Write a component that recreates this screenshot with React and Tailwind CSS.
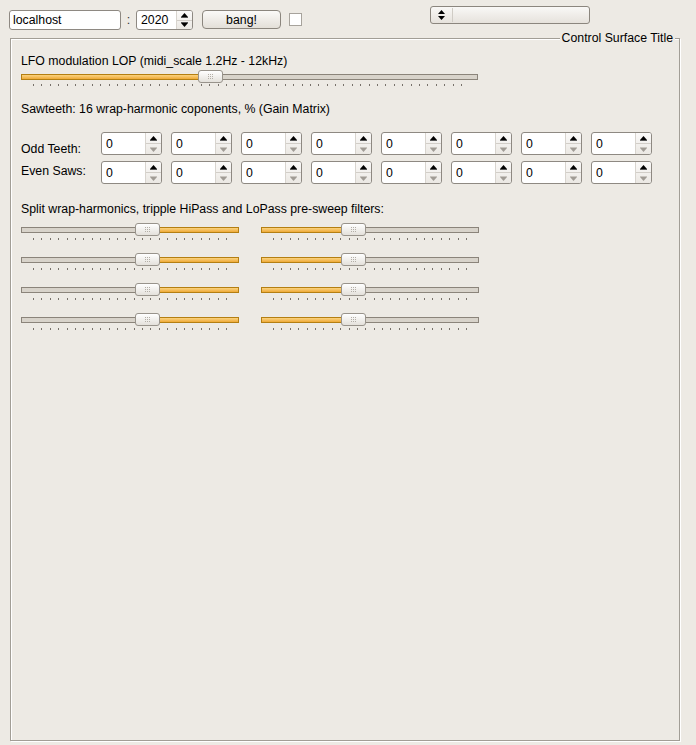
import React from 'react';

const font = { fontFamily: '"Liberation Sans", Arial, sans-serif' };

function ArrowUp({ dim }) {
  return (
    <svg width="7" height="5" viewBox="0 0 7 5" className="block">
      <polygon points="0,4 3.5,0 7,4" fill={dim ? '#a19c95' : '#000'} />
      <rect x="0" y="4" width="7" height="1" fill={dim ? '#c9c5bf' : '#555'} />
    </svg>
  );
}

function ArrowDown({ dim }) {
  return (
    <svg width="7" height="5" viewBox="0 0 7 5" className="block">
      <rect x="0" y="0" width="7" height="1" fill={dim ? '#c9c5bf' : '#555'} />
      <polygon points="0,1 3.5,5 7,1" fill={dim ? '#a19c95' : '#000'} />
    </svg>
  );
}

function SpinBox({ value, className, downDim }) {
  return (
    <div className={`flex rounded-[3px] border border-[#8e8982] bg-white ${className}`}>
      <div className="flex flex-1 items-center pl-[4px] text-black">{value}</div>
      <div className="flex w-[16px] flex-col rounded-r-[2px] border-l border-[#d8d4ce] bg-gradient-to-b from-[#fbfaf9] to-[#ebe8e3]">
        <div className="flex flex-1 items-center justify-center border-b border-[#d2cec8]"><ArrowUp /></div>
        <div className="flex flex-1 items-center justify-center"><ArrowDown dim={downDim} /></div>
      </div>
    </div>
  );
}

function Handle() {
  return (
    <div className="z-10 flex h-[13px] w-[25px] shrink-0 items-center justify-center rounded-[3px] border border-[#98938b] bg-gradient-to-b from-[#ffffff] to-[#e4e1db]">
      <div className="grid grid-cols-3 gap-[1px]">
        {Array.from({ length: 9 }).map((_, i) => (
          <div key={i} className="h-[1px] w-[1px] bg-[#b3aea6]" />
        ))}
      </div>
    </div>
  );
}

function Groove({ on, className }) {
  return on ? (
    <div className={`h-[6px] border border-[#b47f12] bg-gradient-to-b from-[#fbd37e] to-[#eeaa35] ${className}`} />
  ) : (
    <div className={`h-[6px] border border-[#8b847a] bg-[#d8d3ca] ${className}`} />
  );
}

function Ticks({ count, className }) {
  return (
    <div className={`flex h-[3px] justify-between ${className}`}>
      {Array.from({ length: count }).map((_, i) => (
        <div key={i} className="h-[2px] w-[1px] bg-[#77716a]" />
      ))}
    </div>
  );
}

function SplitSlider({ side }) {
  return (
    <div className="w-[218px]">
      <div className="flex h-[13px] items-center">
        {side === 'right' ? (
          <>
            <Groove className="w-[114px] border-r-0" />
            <Handle />
            <Groove on className="flex-1 border-l-0" />
          </>
        ) : (
          <>
            <Groove on className="w-[80px] border-r-0" />
            <Handle />
            <Groove className="flex-1 border-l-0" />
          </>
        )}
      </div>
      <Ticks count={24} className="mt-[2px] px-[12px]" />
    </div>
  );
}

function SpinRow({ label, labelOffset }) {
  return (
    <div className="flex h-[23px]">
      <div className={`h-[14px] w-[80px] ${labelOffset}`}>{label}</div>
      <div className="flex gap-[9px]">
        {Array.from({ length: 8 }).map((_, i) => (
          <SpinBox key={i} value="0" downDim className="h-[23px] w-[61px]" />
        ))}
      </div>
    </div>
  );
}

export default function App() {
  return (
    <div style={font} className="h-[745px] w-[696px] overflow-hidden bg-[#edeae4] text-[12.3px] leading-[14px] text-black">
      {/* toolbar */}
      <div className="flex h-[38px] items-start pl-[9px] pt-[10px]">
        <div className="flex h-[20px] w-[112px] items-center rounded-[3px] border border-[#8e8982] bg-white pl-[3px]">localhost</div>
        <div className="flex h-[20px] w-[15px] items-center justify-center text-[#333]">:</div>
        <SpinBox value="2020" className="h-[20px] w-[57px]" />
        <button className="ml-[9px] flex h-[19px] w-[79px] items-center justify-center rounded-[4px] border border-[#8b867e] bg-gradient-to-b from-[#fbfaf8] to-[#e3dfd8]">bang!</button>
        <div className="ml-[8px] mt-[3px] h-[13px] w-[13px] border border-[#a7a39c] bg-white" />
        <div className="-mt-[4px] ml-[128px] flex h-[18px] w-[160px] items-center rounded-[3px] border border-[#8b867e] bg-gradient-to-b from-[#f9f8f6] to-[#e6e2dc]">
          <div className="flex w-[21px] flex-col items-center">
            <svg width="7" height="10" viewBox="0 0 7 10" className="block">
              <polygon points="0,4 3.5,0 7,4" fill="#000" />
              <polygon points="0,6 3.5,10 7,6" fill="#000" />
            </svg>
          </div>
          <div className="h-[14px] w-[1px] bg-[#d0ccc5]" />
        </div>
      </div>

      {/* group box */}
      <div className="relative ml-[10px] h-[703px] w-[670px] border border-[#a29e96] shadow-[inset_1px_1px_0_#ffffff,1px_1px_0_#ffffff]">
        <div className="absolute -top-[8px] right-[4px] bg-[#edeae4] px-[2px]">Control Surface Title</div>
        <div className="flex flex-col pl-[10px] pt-[15px]">
          <div>LFO modulation LOP (midi_scale 1.2Hz - 12kHz)</div>
          <div className="mt-[2px] w-[457px]">
            <div className="flex h-[13px] items-center">
              <Groove on className="w-[177px] border-r-0" />
              <Handle />
              <Groove className="flex-1 border-l-0" />
            </div>
            <Ticks count={52} className="mt-[1px] pl-[12px] pr-[16px]" />
          </div>

          <div className="mt-[15px]">Sawteeth: 16 wrap-harmonic coponents, % (Gain Matrix)</div>

          <div className="mt-[16px] flex flex-col gap-[6px]">
            <SpinRow label="Odd Teeth:" labelOffset="mt-[10px]" />
            <SpinRow label="Even Saws:" labelOffset="mt-[3px]" />
          </div>

          <div className="mt-[18px]">Split wrap-harmonics, tripple HiPass and LoPass pre-sweep filters:</div>

          <div className="mt-[7px] flex flex-col gap-[12px]">
            {[0, 1, 2, 3].map((r) => (
              <div key={r} className="flex gap-[22px]">
                <SplitSlider side="right" />
                <SplitSlider side="left" />
              </div>
            ))}
          </div>
        </div>
      </div>
    </div>
  );
}
